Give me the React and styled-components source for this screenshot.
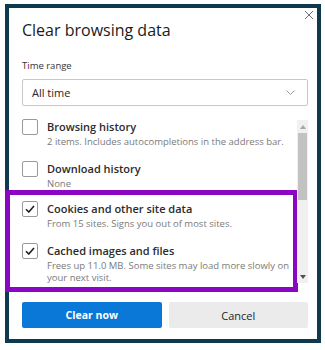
import React from 'react';
import styled, { createGlobalStyle } from 'styled-components';

const GlobalStyle = createGlobalStyle`
  body {
    margin: 0;
    background: #ffffff;
    font-family: 'Segoe UI', 'Open Sans', 'Noto Sans', sans-serif;
    color: #1f1f1f;
  }
`;

const Frame = styled.div`
  position: relative;
  box-sizing: border-box;
  width: 316px;
  height: 339px;
  margin: 4px 0 0 5px;
  border: 4px solid #0e3a4e;
  background: #ffffff;
  padding: 0 9px 11px 13px;
  display: flex;
  flex-direction: column;
`;

const CloseButton = styled.button`
  position: absolute;
  top: 2px;
  right: 3px;
  width: 10px;
  height: 10px;
  padding: 0;
  border: 0;
  background: none;
  display: flex;
`;

const Title = styled.h1`
  margin: 11px 0 0;
  font-size: 16px;
  line-height: 22px;
  font-weight: 400;
  color: #1b1b1b;
`;

const FieldLabel = styled.div`
  margin-top: 18px;
  font-size: 9.5px;
  line-height: 14px;
  color: #333333;
`;

const Select = styled.div`
  margin-top: 6px;
  height: 27px;
  box-sizing: border-box;
  border: 1px solid #c8c8c8;
  border-radius: 2px;
  display: flex;
  align-items: center;
  justify-content: space-between;
  padding: 0 12px 0 9px;
  font-size: 11px;
  color: #262626;
`;

const ListArea = styled.div`
  margin-top: 13px;
  display: flex;
`;

const Items = styled.div`
  flex: 1;
  display: flex;
  flex-direction: column;
`;

const Group = styled.div`
  display: flex;
  flex-direction: column;
  gap: ${({ $gap }) => $gap}px;
`;

const Highlight = styled(Group)`
  margin: 0 -1px 0 -17px;
  border: 5px solid #8b06c2;
  padding: 6px 0 3px 12px;
`;

const Item = styled.div`
  display: flex;
  gap: 9px;
`;

const Box = styled.span`
  flex: none;
  width: 16px;
  height: 16px;
  box-sizing: border-box;
  border: 1px solid #9a9a9a;
  border-radius: 2px;
  background: #ffffff;
  display: flex;
  align-items: center;
  justify-content: center;
`;

const ItemText = styled.div`
  display: flex;
  flex-direction: column;
  gap: 1px;
`;

const ItemTitle = styled.div`
  font-size: 11px;
  line-height: 16px;
  font-weight: 600;
  color: #2b2b2b;
`;

const ItemNote = styled.div`
  font-size: 9.5px;
  line-height: 12px;
  color: #7a7a7a;
`;

const Scrollbar = styled.div`
  flex: none;
  width: 11px;
  margin: 1px 0 9px;
  background: #f0f0f0;
  display: flex;
  flex-direction: column;
  align-items: center;
`;

const Arrow = styled.div`
  height: 13px;
  display: flex;
  align-items: center;
  justify-content: center;
`;

const Thumb = styled.div`
  width: 9px;
  height: 67px;
  background: #c2c2c2;
`;

const Spacer = styled.div`
  flex: 1;
`;

const Buttons = styled.div`
  margin-top: auto;
  display: grid;
  grid-template-columns: 1fr 1fr;
  gap: 7px;
`;

const Button = styled.button`
  height: 26px;
  border: 0;
  border-radius: 2px;
  font-family: inherit;
  font-size: ${({ $primary }) => ($primary ? '10.5px' : '11px')};
  font-weight: ${({ $primary }) => ($primary ? 700 : 400)};
  color: ${({ $primary }) => ($primary ? '#ffffff' : '#262626')};
  background: ${({ $primary }) => ($primary ? '#0a78d6' : '#ebebeb')};
`;

const Checkbox = ({ checked }) => (
  <Box>
    {checked && (
      <svg width="10" height="8" viewBox="0 0 10 8">
        <path d="M1 4.2 L3.8 7 L9 1" fill="none" stroke="#1f1f1f" strokeWidth="1.6" />
      </svg>
    )}
  </Box>
);

const Option = ({ title, note, checked }) => (
  <Item>
    <Checkbox checked={checked} />
    <ItemText>
      <ItemTitle>{title}</ItemTitle>
      <ItemNote>{note}</ItemNote>
    </ItemText>
  </Item>
);

export default function App() {
  return (
    <>
      <GlobalStyle />
      <Frame>
        <CloseButton aria-label="Close">
          <svg width="10" height="10" viewBox="0 0 10 10">
            <path d="M1 1 L9 9 M9 1 L1 9" stroke="#6e6e6e" strokeWidth="1" />
          </svg>
        </CloseButton>
        <Title>Clear browsing data</Title>
        <FieldLabel>Time range</FieldLabel>
        <Select>
          <span>All time</span>
          <svg width="9" height="5" viewBox="0 0 9 5">
            <path d="M0.5 0.5 L4.5 4.5 L8.5 0.5" fill="none" stroke="#9a9a9a" strokeWidth="1" />
          </svg>
        </Select>
        <ListArea>
          <Items>
            <Group $gap={13}>
              <Option
                title="Browsing history"
                note="2 items. Includes autocompletions in the address bar."
              />
              <Option title="Download history" note="None" />
            </Group>
            <Highlight $gap={13}>
              <Option
                checked
                title="Cookies and other site data"
                note="From 15 sites. Signs you out of most sites."
              />
              <Option
                checked
                title="Cached images and files"
                note="Frees up 11.0 MB. Some sites may load more slowly on your next visit."
              />
            </Highlight>
          </Items>
          <Scrollbar>
            <Arrow>
              <svg width="6" height="4" viewBox="0 0 6 4">
                <path d="M0 4 L3 0 L6 4 Z" fill="#a6a6a6" />
              </svg>
            </Arrow>
            <Thumb />
            <Spacer />
            <Arrow>
              <svg width="6" height="4" viewBox="0 0 6 4">
                <path d="M0 0 L6 0 L3 4 Z" fill="#505050" />
              </svg>
            </Arrow>
          </Scrollbar>
        </ListArea>
        <Buttons>
          <Button $primary>Clear now</Button>
          <Button>Cancel</Button>
        </Buttons>
      </Frame>
    </>
  );
}
